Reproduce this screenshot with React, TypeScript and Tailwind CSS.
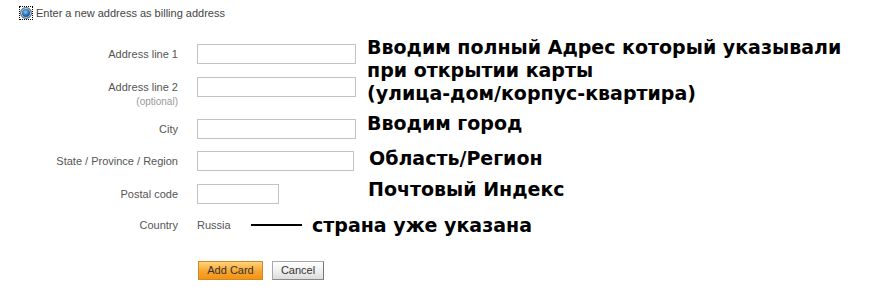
const rows = [
  { label: "Address line 1", width: "w-[159px]", mt: "mt-[24px]" },
  { label: "Address line 2", note: "(optional)", width: "w-[159px]", mt: "mt-[13px]" },
  { label: "City", width: "w-[159px]", mt: "mt-[22px]" },
  { label: "State / Province / Region", width: "w-[157px]", mt: "mt-[12px]" },
  { label: "Postal code", width: "w-[82px]", mt: "mt-[13px]" },
];

const RadioChecked = () => (
  <span className="flex h-[14px] w-[14px] shrink-0 items-center justify-center border border-dotted border-black">
    <span className="h-[12px] w-[12px] rounded-full border border-[#5f6f80] bg-[radial-gradient(circle_at_45%_40%,#8cc6f0_0%,#1f66ad_45%,#0a3565_100%)] shadow-[inset_0_0_0_1px_#cfd8e0]" />
  </span>
);

export default function App() {
  return (
    <div className="flex min-h-[291px] w-[883px] bg-white font-['Liberation_Sans',Arial,sans-serif] text-[11px] text-[#555]">
      <div className="flex w-[360px] shrink-0 flex-col">
        <div className="ml-[19px] mt-[6px] flex h-[14px] items-center gap-[3px] whitespace-nowrap text-[#444]">
          <RadioChecked />
          <span>Enter a new address as billing address</span>
        </div>

        {rows.map((r) => (
          <div key={r.label} className={`${r.mt} flex h-[20px] items-start`}>
            <div className="flex w-[178px] shrink-0 flex-col items-end">
              <span className="h-[20px] whitespace-nowrap leading-[20px]">{r.label}</span>
              {r.note && <span className="-mt-[1px] text-[10px] leading-[12px] text-[#999]">{r.note}</span>}
            </div>
            <input
              type="text"
              className={`ml-[19px] h-[20px] shrink-0 ${r.width} border border-[#bcc3c9] bg-white px-1 outline-none`}
            />
          </div>
        ))}

        <div className="mt-[11px] flex h-[20px] items-center whitespace-nowrap">
          <span className="w-[178px] shrink-0 text-right">Country</span>
          <span className="ml-[19px] w-[54px] shrink-0">Russia</span>
          <span className="h-[2px] w-[51px] shrink-0 bg-black" />
          <span className="ml-[10px] shrink-0 font-['DejaVu_Sans',Verdana,sans-serif] text-[19px] font-bold leading-[23px] text-black">
            страна уже указана
          </span>
        </div>

        <div className="ml-[198px] mt-[26px] flex gap-[9px]">
          <button className="h-[19px] w-[65px] border border-[#d08a25] bg-[linear-gradient(#ffd27a,#f8a430_55%,#f39414)] text-[11px] leading-[17px] text-[#333]">
            Add Card
          </button>
          <button className="h-[19px] w-[52px] border border-[#a8a8a8] border-r-[#777] border-b-[#888] bg-[linear-gradient(#ffffff,#f0f0f0_50%,#dcdcdc)] text-[11px] leading-[17px] text-[#333]">
            Cancel
          </button>
        </div>
      </div>

      <div className="ml-[7px] flex flex-col whitespace-nowrap font-['DejaVu_Sans',Verdana,sans-serif] text-[19px] font-bold leading-[23px] text-black">
        <p className="mt-[36px]">
          Вводим полный Адрес который указывали
          <br />
          при открытии карты
          <br />
          (улица-дом/корпус-квартира)
        </p>
        <p className="mt-[7px]">Вводим город</p>
        <p className="ml-[2px] mt-[12px]">Область/Регион</p>
        <p className="ml-[1px] mt-[8px]">Почтовый Индекс</p>
      </div>
    </div>
  );
}
